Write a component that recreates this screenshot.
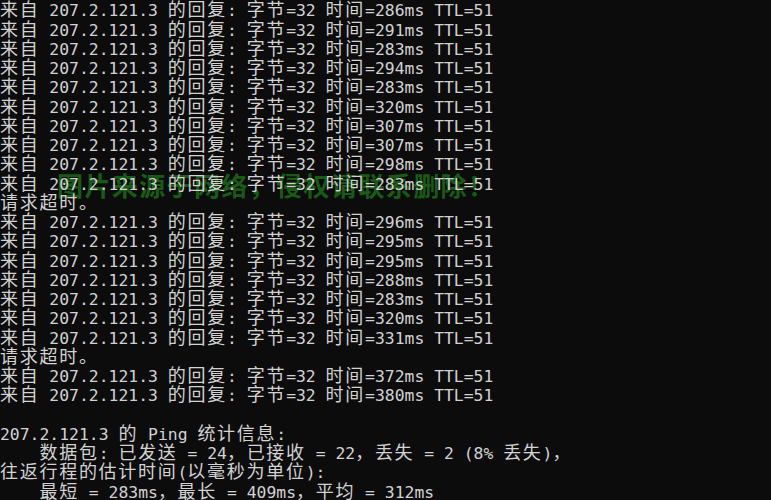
import React from 'react';

const lines: string[] = [
  '来自 207.2.121.3 的回复: 字节=32 时间=286ms TTL=51',
  '来自 207.2.121.3 的回复: 字节=32 时间=291ms TTL=51',
  '来自 207.2.121.3 的回复: 字节=32 时间=283ms TTL=51',
  '来自 207.2.121.3 的回复: 字节=32 时间=294ms TTL=51',
  '来自 207.2.121.3 的回复: 字节=32 时间=283ms TTL=51',
  '来自 207.2.121.3 的回复: 字节=32 时间=320ms TTL=51',
  '来自 207.2.121.3 的回复: 字节=32 时间=307ms TTL=51',
  '来自 207.2.121.3 的回复: 字节=32 时间=307ms TTL=51',
  '来自 207.2.121.3 的回复: 字节=32 时间=298ms TTL=51',
  '来自 207.2.121.3 的回复: 字节=32 时间=283ms TTL=51',
  '请求超时。',
  '来自 207.2.121.3 的回复: 字节=32 时间=296ms TTL=51',
  '来自 207.2.121.3 的回复: 字节=32 时间=295ms TTL=51',
  '来自 207.2.121.3 的回复: 字节=32 时间=295ms TTL=51',
  '来自 207.2.121.3 的回复: 字节=32 时间=288ms TTL=51',
  '来自 207.2.121.3 的回复: 字节=32 时间=283ms TTL=51',
  '来自 207.2.121.3 的回复: 字节=32 时间=320ms TTL=51',
  '来自 207.2.121.3 的回复: 字节=32 时间=331ms TTL=51',
  '请求超时。',
  '来自 207.2.121.3 的回复: 字节=32 时间=372ms TTL=51',
  '来自 207.2.121.3 的回复: 字节=32 时间=380ms TTL=51',
  '',
  '207.2.121.3 的 Ping 统计信息:',
  '    数据包: 已发送 = 24，已接收 = 22，丢失 = 2 (8% 丢失)，',
  '往返行程的估计时间(以毫秒为单位):',
  '    最短 = 283ms，最长 = 409ms，平均 = 312ms',
];

// console cells: half-width ascii, wide cells for CJK
const Line: React.FC<{ text: string }> = ({ text }) => {
  const parts = text.split(/([\u3000-\u303f\u4e00-\u9fff\uff00-\uffef]+)/);
  return (
    <div className="h-[19.25px] leading-[19.25px] whitespace-pre">
      {parts.map((p, i) =>
        i % 2 === 1 ? (
          <span key={i} className="text-[18px] tracking-[1.72px] font-['Noto_Sans_CJK_SC',sans-serif]">
            {p}
          </span>
        ) : (
          <span key={i}>{p}</span>
        )
      )}
    </div>
  );
};

export default function App() {
  return (
    <div className="w-[771px] h-[500px] bg-[#0c0c0c] text-[#d2d2d2] overflow-hidden relative font-['DejaVu_Sans_Mono',monospace] text-[16.4px]">
      {/* watermark, sits under the console text */}
      <div className="absolute left-[57px] top-[172px] text-[26px] leading-[26px] font-bold text-[#1d6e19] opacity-80 font-['Noto_Sans_CJK_SC',sans-serif] tracking-[1.4px]">
        图片来源于网络，侵权请联系删除！
      </div>

      <div className="relative -mt-[0.6px]">
        {lines.map((l, i) => (
          <Line key={i} text={l} />
        ))}
      </div>
    </div>
  );
}
